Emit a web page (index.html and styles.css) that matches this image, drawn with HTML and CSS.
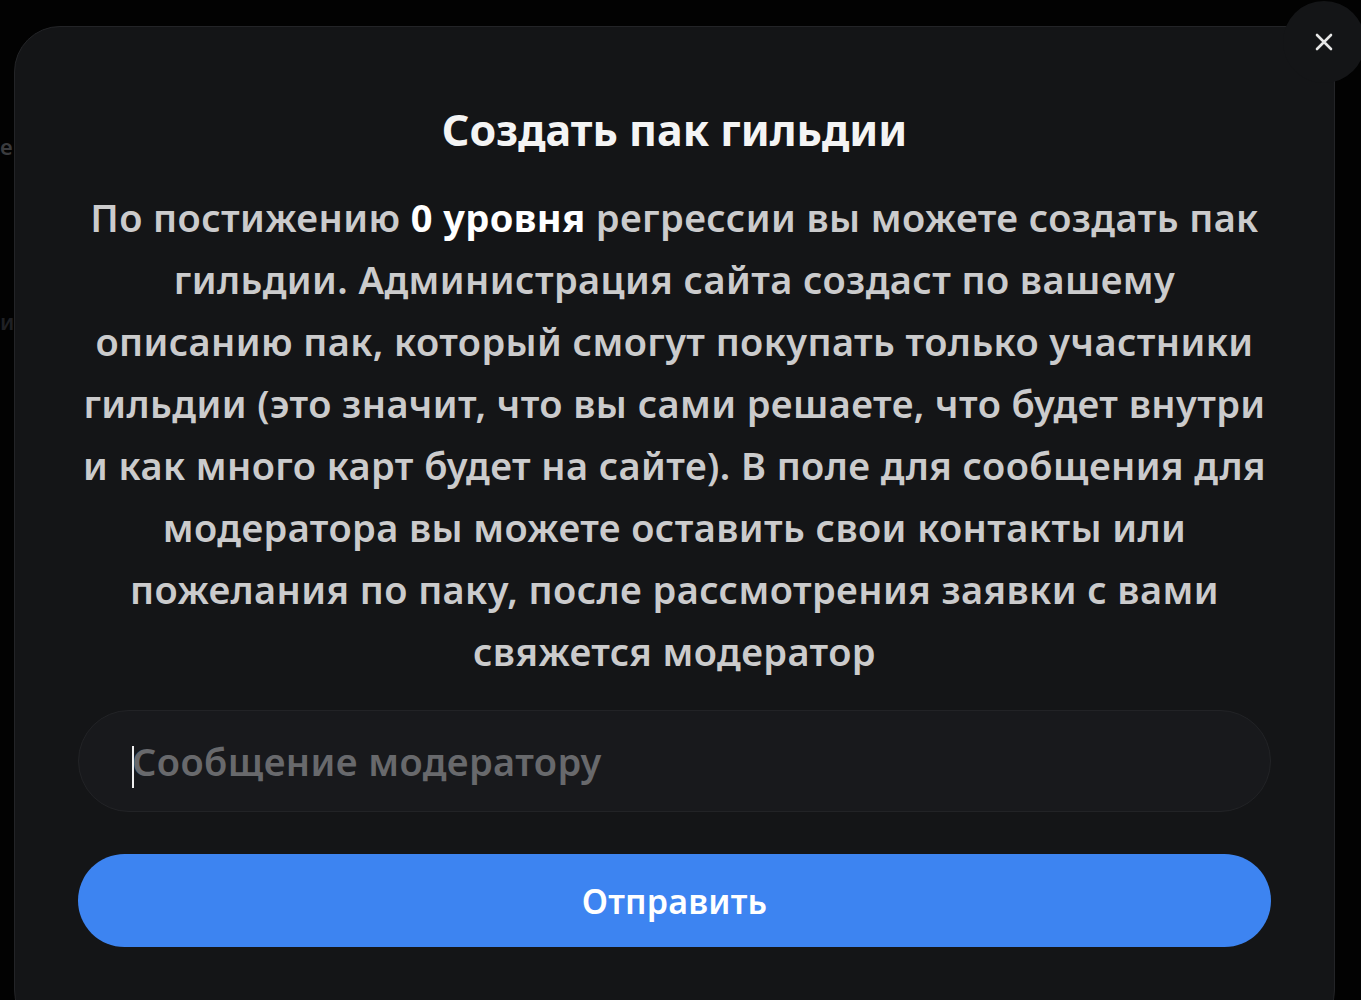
FILE: index.html
```html
<!DOCTYPE html>
<html lang="ru">
<head>
<meta charset="utf-8">
<title>Создать пак гильдии</title>
<link rel="stylesheet" href="styles.css">
</head>
<body>
<div class="backdrop">
  <div class="page-hint hint-a">е</div>
  <div class="page-hint hint-b">и</div>

  <section class="modal">
    <h2 class="modal-title">Создать пак гильдии</h2>
    <p class="modal-text">По постижению <b>0 уровня</b> регрессии вы можете создать пак<br>гильдии. Администрация сайта создаст по вашему<br>описанию пак, который смогут покупать только участники<br>гильдии (это значит, что вы сами решаете, что будет внутри<br>и как много карт будет на сайте). В поле для сообщения для<br>модератора вы можете оставить свои контакты или<br>пожелания по паку, после рассмотрения заявки с вами<br>свяжется модератор</p>
    <form class="modal-form">
      <div class="field">
        <span class="caret"></span>
        <input class="field-input" type="text" placeholder="Сообщение модератору">
      </div>
      <button class="submit" type="button">Отправить</button>
    </form>
  </section>

  <button class="close" type="button" aria-label="Закрыть">
    <svg viewBox="0 0 24 24" width="24" height="24">
      <path d="M5 5 L19 19 M19 5 L5 19" stroke="#e6e6e6" stroke-width="2.6" stroke-linecap="round" fill="none"/>
    </svg>
  </button>
</div>
</body>
</html>
```

FILE: styles.css
```css
* { box-sizing: border-box; }

html, body {
  margin: 0;
  height: 100%;
  background: #020202;
  overflow: hidden;
}

body {
  font-family: "Noto Sans", "Open Sans", sans-serif;
}

.backdrop {
  position: relative;
  height: 1000px;
  padding: 26px 27px 0 14px;
}

/* faint letters of the page behind the overlay */
.page-hint {
  position: absolute;
  left: 0;
  width: 14px;
  overflow: hidden;
  color: #3a3b3e;
  font-size: 22px;
  font-weight: 600;
  line-height: 30px;
}
.hint-a { top: 131px; }
.hint-b { top: 306px; color: #1f2024; }

.modal {
  position: relative;
  width: 1321px;
  height: 1010px;
  background: #141517;
  border: 1.5px solid #232427;
  border-radius: 46px;
  padding: 74px 40px 0 40px;
  display: flex;
  flex-direction: column;
  align-items: center;
}

.modal-title {
  margin: 0;
  color: #f4f4f4;
  font-size: 43px;
  font-weight: 700;
  line-height: 58px;
  letter-spacing: 0;
}

.modal-text {
  margin: 27px 0 0;
  color: #cbcbcc;
  font-size: 38px;
  font-weight: 600;
  line-height: 62px;
  text-align: center;
  letter-spacing: 0.4px;
  white-space: nowrap;
}
.modal-text b {
  color: #ffffff;
  font-weight: 700;
}

.modal-form {
  width: 100%;
  padding: 0 23px;
  margin-top: 28px;
  display: flex;
  flex-direction: column;
  gap: 42px;
}

.field {
  position: relative;
  height: 102px;
  border-radius: 51px;
  background: #18191c;
  border: 1.5px solid #222326;
  display: flex;
  align-items: center;
  padding-left: 53px;
}

.caret {
  position: absolute;
  left: 53px;
  top: 35px;
  width: 2px;
  height: 42px;
  background: #f0f0f0;
}

.field-input {
  flex: 1;
  background: transparent;
  border: 0;
  outline: none;
  color: #e0e0e0;
  font-family: inherit;
  font-size: 38px;
  font-weight: 600;
  letter-spacing: 0.4px;
  padding: 0;
}
.field-input::placeholder {
  color: #68696c;
}

.submit {
  height: 93px;
  border: 0;
  border-radius: 47px;
  background: #3d84f1;
  color: #ffffff;
  font-family: inherit;
  font-size: 34px;
  font-weight: 600;
  letter-spacing: 0.2px;
  cursor: pointer;
}

.close {
  position: absolute;
  top: 1px;
  left: 1283px;
  width: 82px;
  height: 82px;
  border-radius: 50%;
  border: 0;
  background: #141517;
  display: flex;
  align-items: center;
  justify-content: center;
  padding: 0;
}
```
